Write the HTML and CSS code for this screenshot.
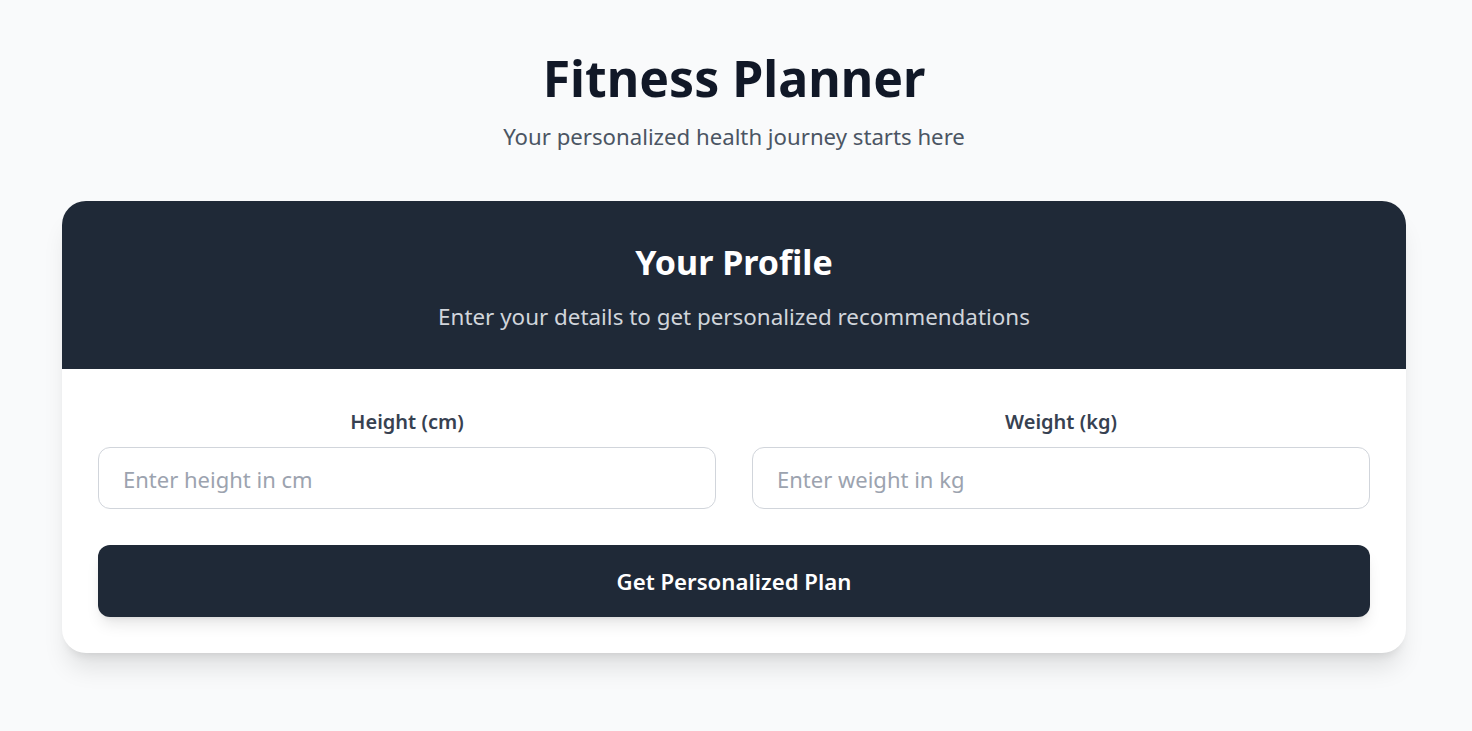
FILE: index.html
```html
<!DOCTYPE html>
<html lang="en">
<head>
<meta charset="utf-8">
<title>Fitness Planner</title>
<link rel="stylesheet" href="styles.css">
</head>
<body>
<main class="page">
  <header class="intro">
    <h1 class="title">Fitness Planner</h1>
    <p class="tagline">Your personalized health journey starts here</p>
  </header>
  <section class="card">
    <div class="card-head">
      <h2 class="card-title">Your Profile</h2>
      <p class="card-sub">Enter your details to get personalized recommendations</p>
    </div>
    <form class="card-body">
      <div class="fields">
        <label class="field">
          <span class="label">Height (cm)</span>
          <input class="input" type="number" placeholder="Enter height in cm">
        </label>
        <label class="field">
          <span class="label">Weight (kg)</span>
          <input class="input" type="number" placeholder="Enter weight in kg">
        </label>
      </div>
      <button class="submit" type="button">Get Personalized Plan</button>
    </form>
  </section>
</main>
</body>
</html>
```
FILE: styles.css
```css
* { box-sizing: border-box; }
html, body { margin: 0; padding: 0; }
body {
  background: #f9fafb;
  font-family: "Noto Sans", "Open Sans", sans-serif;
  color: #111827;
}
.page {
  padding: 44px 0 40px 62px;
}
.intro {
  width: 1344px;
  text-align: center;
  margin-bottom: 48px;
}
.title {
  margin: 0;
  font-size: 50px;
  line-height: 68px;
  font-weight: 700;
  color: #111827;
}
.tagline {
  margin: 9px 0 0;
  font-size: 22.2px;
  line-height: 32px;
  color: #4b5563;
}
.card {
  width: 1344px;
  background: #fff;
  border-radius: 24px;
  overflow: hidden;
  box-shadow: 0 20px 25px -5px rgba(0,0,0,0.1), 0 8px 10px -6px rgba(0,0,0,0.1);
}
.card-head {
  background: #1f2937;
  text-align: center;
  padding: 39px 36px 0;
  height: 168px;
}
.card-title {
  margin: 0;
  font-size: 34px;
  line-height: 44px;
  font-weight: 700;
  color: #fff;
}
.card-sub {
  margin: 17px 0 0;
  font-size: 22.4px;
  line-height: 32px;
  color: #d1d5db;
}
.card-body {
  padding: 37px 36px 36px;
  display: flex;
  flex-direction: column;
  gap: 36px;
}
.fields {
  display: grid;
  grid-template-columns: 1fr 1fr;
  gap: 36px;
}
.field {
  display: flex;
  flex-direction: column;
  gap: 9px;
}
.label {
  text-align: center;
  font-size: 20px;
  line-height: 32px;
  font-weight: 600;
  color: #374151;
}
.input {
  height: 62px;
  border: 1px solid #d1d5db;
  border-radius: 12px;
  padding: 2px 24px 0;
  font-family: inherit;
  font-size: 22px;
  color: #111827;
  background: #fff;
  outline: none;
}
.input::placeholder { color: #9ca3af; }
.submit {
  height: 72px;
  border: none;
  border-radius: 12px;
  background: #1f2937;
  color: #fff;
  font-family: inherit;
  font-size: 22.2px;
  font-weight: 600;
  box-shadow: 0 10px 15px -3px rgba(0,0,0,0.1), 0 4px 6px -4px rgba(0,0,0,0.1);
  cursor: pointer;
}
```
